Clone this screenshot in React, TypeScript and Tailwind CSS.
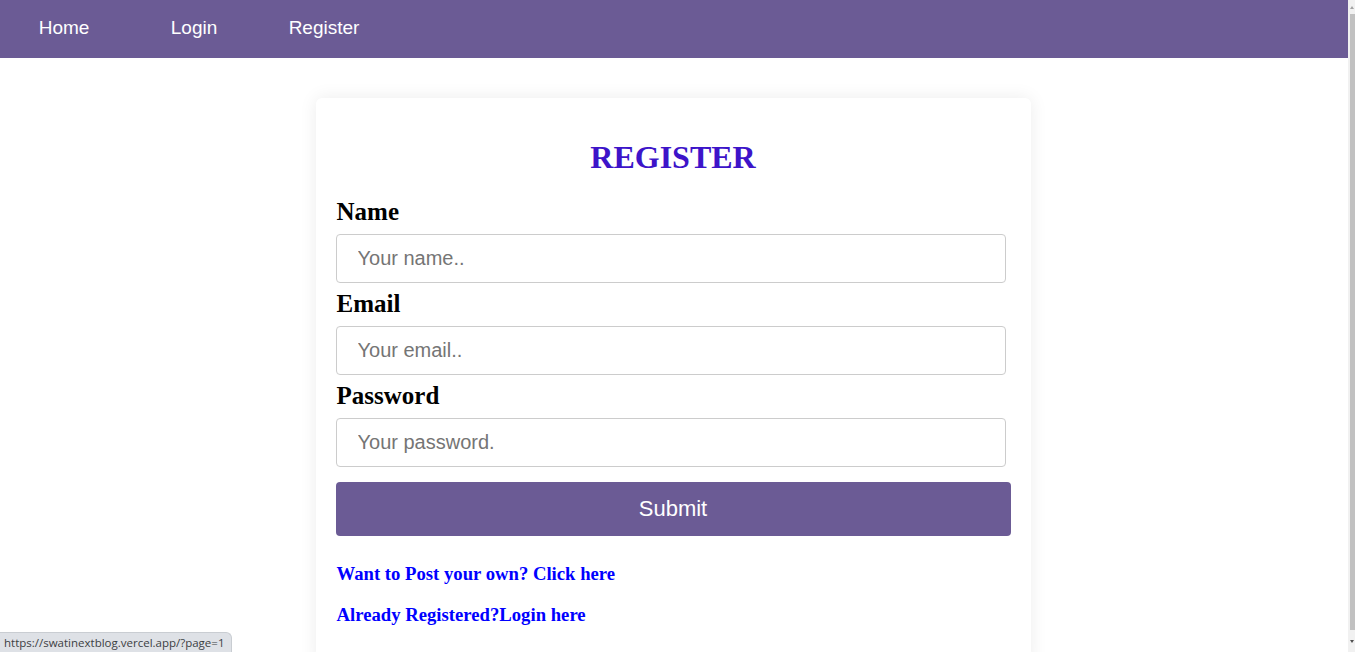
const serif = { fontFamily: '"Liberation Serif", "Times New Roman", serif' };

const fields = [
  { label: "Name", placeholder: "Your name..", type: "text" },
  { label: "Email", placeholder: "Your email..", type: "email" },
  { label: "Password", placeholder: "Your password.", type: "password" },
];

function Nav() {
  return (
    <nav className="flex h-[58px] shrink-0 items-center bg-[#6b5b95] pb-[2px] font-['Liberation_Sans',Arial,sans-serif] text-[19px] text-white">
      {["Home", "Login", "Register"].map((l, i) => (
        <a key={l} href="#" className={"w-[130px] text-center" + (i === 0 ? " -ml-px" : "")}>
          {l}
        </a>
      ))}
    </nav>
  );
}

function Scrollbar() {
  return (
    <div className="flex w-[7px] shrink-0 flex-col items-end bg-[#f1f1f1]">
      <div className="flex h-[14px] w-full items-center justify-end pr-[1px]">
        <div className="h-0 w-0 border-x-[2px] border-b-[3px] border-x-transparent border-b-[#a3a3a3]" />
      </div>
      <div className="h-[616px] w-[5px] bg-[#c1c1c1]" />
      <div className="flex flex-1 items-center justify-end pr-[1px]">
        <div className="h-0 w-0 border-x-[2px] border-t-[3px] border-x-transparent border-t-[#505050]" />
      </div>
    </div>
  );
}

export default function App() {
  return (
    <div className="relative flex h-[652px] w-[1355px] overflow-hidden bg-white">
      <div className="flex w-[1348px] flex-col">
        <Nav />
        <div className="flex justify-center pt-[40px]">
          <div className="-ml-[2px] w-[715px] rounded-md bg-white px-5 pt-[41px] pb-10 shadow-[0_0_18px_rgba(0,0,0,0.08)]">
            <h1
              style={serif}
              className="text-center text-[32px] font-bold leading-[36px] text-[#3d14c9]"
            >
              REGISTER
            </h1>
            <form className="mt-[23px] flex flex-col" onSubmit={(e) => e.preventDefault()}>
              {fields.map((f, i) => (
                <div key={f.label} className={i > 0 ? "mt-[7px]" : ""}>
                  <label style={serif} className="block pl-px text-[25px] font-bold leading-[28px] text-black">
                    {f.label}
                  </label>
                  <input
                    type={f.type}
                    placeholder={f.placeholder}
                    className="mt-2 box-border h-[49px] w-[670px] rounded border border-[#cccccc] px-[21px] font-['Liberation_Sans',Arial,sans-serif] text-[20px] text-black outline-none placeholder:text-[#757575]"
                  />
                </div>
              ))}
              <button
                type="submit"
                className="mt-[15px] h-[54px] w-full rounded bg-[#6b5b95] pb-px font-['Liberation_Sans',Arial,sans-serif] text-[22px] text-white"
              >
                Submit
              </button>
            </form>
            <div style={serif} className="mt-[28px] flex flex-col gap-[21px] text-[18.7px] font-bold leading-[20px] text-[#0000ff]">
              <a href="#" className="ml-px">Want to Post your own? Click here</a>
              <a href="#" className="ml-px">Already Registered?Login here</a>
            </div>
          </div>
        </div>
      </div>
      <Scrollbar />
      <div className="absolute bottom-0 left-0 flex h-[20px] w-[232px] items-center overflow-hidden whitespace-nowrap rounded-tr-md border-t border-r border-[#c9cdd2] bg-[#dee1e6] pl-[4px] font-['Open_Sans',sans-serif] text-[11.5px] text-[#3c4043]">
        https://swatinextblog.vercel.app/?page=1
      </div>
    </div>
  );
}
